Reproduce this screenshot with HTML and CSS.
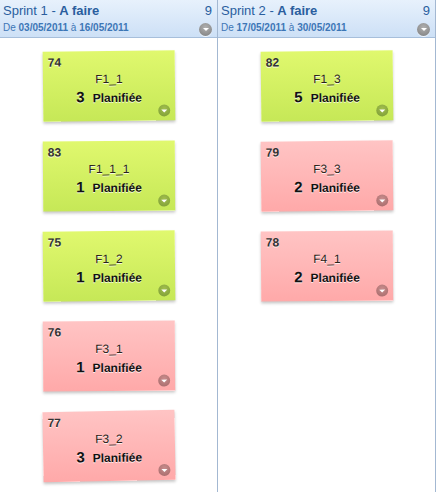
FILE: index.html
```html
<!DOCTYPE html>
<html>
<head>
<meta charset="utf-8">
<link rel="stylesheet" href="styles.css">
</head>
<body>
<div class="board">
	<div class="column">
		<div class="col-head">
			<div class="head-line">
				<span class="head-title">Sprint 1 - <b>A faire</b></span>
				<span class="head-count">9</span>
			</div>
			<div class="head-line">
				<span class="head-dates">De <b>03/05/2011</b> à <b>16/05/2011</b></span>
				<span class="menu-btn head-btn"></span>
			</div>
		</div>
		<div class="col-body">
			<div class="card green tilt-a">
				<div class="card-id">74</div>
				<div class="card-title">F1_1</div>
				<div class="card-state"><span class="pts">3</span><span>Planifiée</span></div>
				<span class="menu-btn card-btn"></span>
			</div>
			<div class="card green tilt-b">
				<div class="card-id">83</div>
				<div class="card-title">F1_1_1</div>
				<div class="card-state"><span class="pts">1</span><span>Planifiée</span></div>
				<span class="menu-btn card-btn"></span>
			</div>
			<div class="card green tilt-a">
				<div class="card-id">75</div>
				<div class="card-title">F1_2</div>
				<div class="card-state"><span class="pts">1</span><span>Planifiée</span></div>
				<span class="menu-btn card-btn"></span>
			</div>
			<div class="card red tilt-b">
				<div class="card-id">76</div>
				<div class="card-title">F3_1</div>
				<div class="card-state"><span class="pts">1</span><span>Planifiée</span></div>
				<span class="menu-btn card-btn"></span>
			</div>
			<div class="card red tilt-c">
				<div class="card-id">77</div>
				<div class="card-title">F3_2</div>
				<div class="card-state"><span class="pts">3</span><span>Planifiée</span></div>
				<span class="menu-btn card-btn"></span>
			</div>
		</div>
	</div>
	<div class="column">
		<div class="col-head">
			<div class="head-line">
				<span class="head-title">Sprint 2 - <b>A faire</b></span>
				<span class="head-count">9</span>
			</div>
			<div class="head-line">
				<span class="head-dates">De <b>17/05/2011</b> à <b>30/05/2011</b></span>
				<span class="menu-btn head-btn"></span>
			</div>
		</div>
		<div class="col-body">
			<div class="card green tilt-a">
				<div class="card-id">82</div>
				<div class="card-title">F1_3</div>
				<div class="card-state"><span class="pts">5</span><span>Planifiée</span></div>
				<span class="menu-btn card-btn"></span>
			</div>
			<div class="card red tilt-a">
				<div class="card-id">79</div>
				<div class="card-title">F3_3</div>
				<div class="card-state"><span class="pts">2</span><span>Planifiée</span></div>
				<span class="menu-btn card-btn"></span>
			</div>
			<div class="card red tilt-b">
				<div class="card-id">78</div>
				<div class="card-title">F4_1</div>
				<div class="card-state"><span class="pts">2</span><span>Planifiée</span></div>
				<span class="menu-btn card-btn"></span>
			</div>
		</div>
	</div>
</div>
</body>
</html>
```

FILE: styles.css
```css
body {
	margin: 0;
	padding: 0;
	background: #ffffff;
	font-family: "Liberation Sans", Arial, sans-serif;
}
.board {
	display: flex;
	height: 492px;
}
.column {
	width: 217px;
	border-right: 1px solid #a3b8d2;
	display: flex;
	flex-direction: column;
}
.col-head {
	height: 38px;
	padding: 3px 5px 0 3px;
	box-sizing: border-box;
	background: linear-gradient(#e7f1fc, #cde0f6);
	border-bottom: 1px solid #a7bfdb;
	color: #2a5e9e;
}
.head-line {
	display: flex;
	justify-content: space-between;
	align-items: center;
}
.head-title {
	font-size: 13px;
	line-height: 16px;
}
.head-count {
	font-size: 13px;
	line-height: 16px;
}
.head-dates {
	font-size: 10px;
	line-height: 16px;
	color: #3d76b6;
	margin-top: 1px;
}
.menu-btn {
	display: inline-block;
	border-radius: 50%;
	position: relative;
}
.menu-btn::after {
	content: "";
	position: absolute;
	left: 50%;
	top: 50%;
	margin-left: -3px;
	margin-top: -1px;
	border-left: 3px solid transparent;
	border-right: 3px solid transparent;
	border-top: 3px solid #ffffff;
}
.head-btn {
	width: 13px;
	height: 13px;
	margin-top: 3px;
	background: radial-gradient(circle at 50% 35%, #b0b0b0, #7d7d7d);
	box-shadow: 0 1px 0 rgba(255,255,255,0.7);
}
.col-body {
	display: flex;
	flex-direction: column;
	align-items: center;
	gap: 20px;
	padding-top: 13px;
}
.card {
	width: 132px;
	height: 70px;
	box-sizing: border-box;
	padding: 3px 5px;
	position: relative;
	box-shadow: 0 2px 3px rgba(0,0,0,0.22);
	color: #222222;
	text-shadow: 0 1px 0 rgba(255,255,255,0.75);
}
.card.green {
	background: linear-gradient(#e0f86e, #c6e857);
}
.card.red {
	background: linear-gradient(#ffc4c4, #ffa9a9);
}
.tilt-a {
	transform: rotate(-0.6deg);
}
.tilt-b {
	transform: rotate(-0.4deg);
}
.tilt-c {
	transform: rotate(-1deg);
}
.card-id {
	font-size: 12px;
	font-weight: bold;
	line-height: 14px;
	color: #333333;
	margin-top: 1px;
}
.card-title {
	font-size: 12px;
	line-height: 14px;
	text-align: center;
	margin-top: 3px;
	color: #2a2218;
}
.card-state {
	display: flex;
	justify-content: center;
	align-items: baseline;
	gap: 8px;
	font-size: 12px;
	font-weight: bold;
	line-height: 16px;
	margin-top: 3px;
	color: #111111;
}
.card-state .pts {
	font-size: 15px;
}
.card-btn {
	position: absolute;
	right: 5px;
	bottom: 4px;
	width: 12px;
	height: 12px;
	text-shadow: none;
}
.green .card-btn {
	background: radial-gradient(circle at 50% 35%, #a2bf4e, #7a9a33);
}
.red .card-btn {
	background: radial-gradient(circle at 50% 35%, #c98d8d, #a36767);
}
```
